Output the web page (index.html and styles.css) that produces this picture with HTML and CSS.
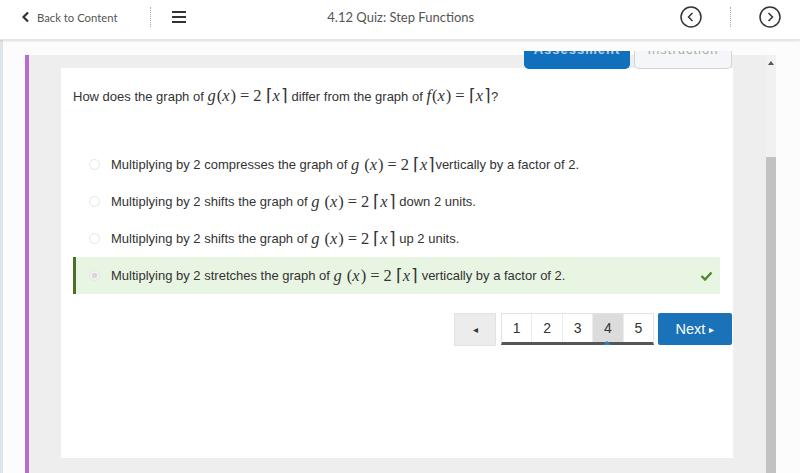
FILE: index.html
```html
<!DOCTYPE html>
<html lang="en">
<head>
    <meta charset="UTF-8">
    <title>4.12 Quiz: Step Functions</title>
    <link rel="stylesheet" href="styles.css">
</head>
<body>
<header class="topbar">
    <a class="back-link" href="#">
        <svg width="9" height="12" viewBox="0 0 9 12"><path d="M7 1.5 L2.5 6 L7 10.5" fill="none" stroke="#333" stroke-width="2.2"/></svg>
        Back to Content
    </a>
    <span class="dots"></span>
    <span class="burger"><i></i><i></i><i></i></span>
    <div class="title">4.12 Quiz: Step Functions</div>
    <span class="circle-btn">
        <svg width="22" height="22" viewBox="0 0 22 22"><circle cx="11" cy="11" r="10" fill="none" stroke="#333" stroke-width="1.5"/><path d="M12.5 7 L8.5 11 L12.5 15" fill="none" stroke="#333" stroke-width="1.5"/></svg>
    </span>
    <span class="dots dots-right"></span>
    <span class="circle-btn circle-next">
        <svg width="22" height="22" viewBox="0 0 22 22"><circle cx="11" cy="11" r="10" fill="none" stroke="#333" stroke-width="1.5"/><path d="M9.5 7 L13.5 11 L9.5 15" fill="none" stroke="#333" stroke-width="1.5"/></svg>
    </span>
</header>

<div class="page">
    <div class="panel">
        <div class="panel-main">
            <div class="tabs">
                <div class="tab tab-active"><span>Assessment</span></div>
                <div class="tab"><span>Instruction</span></div>
            </div>

            <div class="card">
                <p class="question">
                    How does the graph of
                    <span class="math"><i>g</i>(<i>x</i>)<span class="rel">=</span>2<span class="sp"></span>⌈<i>x</i>⌉</span>
                    differ from the graph of
                    <span class="math"><i>f</i>(<i>x</i>)<span class="rel">=</span>⌈<i>x</i>⌉</span>?
                </p>

                <div class="options">
                    <div class="option">
                        <span class="radio"></span>
                        Multiplying by 2 compresses the graph of&nbsp;<span class="math"><i>g</i><span class="sp"></span>(<i>x</i>)<span class="rel">=</span>2<span class="sp"></span>⌈<i>x</i>⌉</span>vertically by a factor of 2.
                    </div>
                    <div class="option">
                        <span class="radio"></span>
                        Multiplying by 2 shifts the graph of&nbsp;<span class="math"><i>g</i><span class="sp"></span>(<i>x</i>)<span class="rel">=</span>2<span class="sp"></span>⌈<i>x</i>⌉</span>&nbsp;down 2 units.
                    </div>
                    <div class="option">
                        <span class="radio"></span>
                        Multiplying by 2 shifts the graph of&nbsp;<span class="math"><i>g</i><span class="sp"></span>(<i>x</i>)<span class="rel">=</span>2<span class="sp"></span>⌈<i>x</i>⌉</span>&nbsp;up 2 units.
                    </div>
                    <div class="option option-correct">
                        <span class="radio radio-on"></span>
                        Multiplying by 2 stretches the graph of&nbsp;<span class="math"><i>g</i><span class="sp"></span>(<i>x</i>)<span class="rel">=</span>2<span class="sp"></span>⌈<i>x</i>⌉</span>&nbsp;vertically by a factor of 2.
                        <svg class="check" width="13" height="10" viewBox="0 0 13 10"><path d="M1.5 5 L5 8.5 L11.5 1.5" fill="none" stroke="#4c8a26" stroke-width="2.4"/></svg>
                    </div>
                </div>

                <div class="pager">
                    <span class="pg-prev">◂</span>
                    <div class="pg-pages">
                        <span class="pg">1</span>
                        <span class="pg">2</span>
                        <span class="pg">3</span>
                        <span class="pg pg-current">4</span>
                        <span class="pg">5</span>
                    </div>
                    <span class="pg-next">Next <small>▸</small></span>
                </div>
            </div>
        </div>
        <div class="scrollbar">
            <span class="scroll-up"></span>
            <div class="thumb"></div>
        </div>
    </div>
</div>
</body>
</html>
```

FILE: styles.css
```css
body {
    margin: 0;
    height: 473px;
    overflow: hidden;
    font-family: "Liberation Sans", Arial, sans-serif;
    color: #333;
    background: #fcfcfc;
}

.topbar {
    position: relative;
    z-index: 2;
    height: 40px;
    padding-bottom: 5px;
    display: flex;
    align-items: center;
    background: white;
    box-shadow: 0 1px 2px rgba(0, 0, 0, 0.12);
    border-bottom: 1px solid #e6e6e6;
    box-sizing: border-box;
    font-family: Lato, sans-serif;
    font-size: 12.5px;
    color: #555;
}

.back-link {
    display: flex;
    align-items: center;
    gap: 7px;
    margin-left: 21px;
    font-size: 11.3px;
    color: #555;
    text-decoration: none;
}

.dots {
    width: 0;
    height: 20px;
    margin-left: 32px;
    border-left: 1px dotted #aaa;
}

.dots-right {
    margin-left: 28px;
}

.burger {
    display: flex;
    flex-direction: column;
    gap: 3px;
    margin-left: 21px;
}

.burger i {
    width: 14px;
    height: 2px;
    background: #333;
}

.title {
    flex: 1;
    text-align: center;
    padding-right: 64px;
    font-size: 13px;
}

.circle-btn {
    display: flex;
}

.circle-next {
    margin-left: 28px;
    margin-right: 19px;
}

.page {
    height: 433px;
    border-left: 3px solid #dde5ea;
    padding: 15px 24px 0 22px;
    box-sizing: border-box;
}

.panel {
    display: flex;
    height: 100%;
    border-left: 4px solid #b96bd0;
    background: #eeeeee;
}

.panel-main {
    flex: 1;
    padding: 0 33px 0 32px;
}

/* tabs are scrolled mostly out of view, only their lower edge shows */
.tabs {
    display: flex;
    justify-content: flex-end;
    gap: 4px;
    margin: -4px 1px 0 0;
    height: 17px;
}

.tab {
    width: 96px;
    height: 17px;
    overflow: hidden;
    text-align: center;
    background: #f4f6f9;
    border: 1px solid #d3d3d3;
    border-top: none;
    border-radius: 0 0 5px 5px;
    font-size: 13px;
    color: #aaa;
    letter-spacing: 1px;
}

.tab span {
    display: block;
    line-height: 14px;
    margin-top: -8px;
}

.tab-active {
    width: 104px;
    background: #1170bd;
    border-color: #1170bd;
    color: #b8d0e8;
    font-weight: bold;
}

.card {
    background: white;
    height: 390px;
    padding: 19px 0 0 12px;
    box-sizing: border-box;
}

.question {
    margin: 0;
    font-size: 13px;
    line-height: 18px;
}

.math {
    font-family: "Liberation Serif", serif;
    font-size: 16.5px;
    white-space: nowrap;
}

.math i {
    padding-right: 1px;
}

.rel {
    padding: 0 4px;
}

.sp {
    display: inline-block;
    width: 4px;
}

.options {
    margin: 40px 13px 0 0;
}

.option {
    display: flex;
    align-items: center;
    height: 37px;
    padding-left: 13px;
    border-left: 3px solid transparent;
    font-size: 13px;
}

.option-correct {
    background: #e9f5e3;
    border-left-color: #4b6f2a;
}

.radio {
    width: 9px;
    height: 9px;
    border: 1px solid #e6e6e6;
    border-radius: 50%;
    margin-right: 11px;
    flex-shrink: 0;
}

.radio-on {
    background: radial-gradient(circle, #d8d8d8 0 2.5px, #f2f2f2 3px);
}

.check {
    margin-left: auto;
    margin-right: 7px;
}

.pager {
    display: flex;
    justify-content: flex-end;
    align-items: flex-start;
    gap: 4px;
    margin: 19px 1px 0 0;
}

.pg-prev {
    width: 40px;
    height: 31px;
    line-height: 31px;
    margin-right: 1px;
    text-align: center;
    background: #ececec;
    border: 1px solid #e2e2e2;
    font-size: 10px;
    color: #333;
}

.pg-pages {
    display: flex;
    border: 1px solid #e2e2e2;
    border-bottom: 3px solid #555;
    height: 28px;
}

.pg {
    position: relative;
    width: 29.4px;
    line-height: 28px;
    text-align: center;
    font-size: 14px;
    border-left: 1px solid #ececec;
}

.pg:first-child {
    border-left: none;
}

.pg-current {
    background: #dcdcdc;
}

.pg-current::after {
    content: "";
    position: absolute;
    left: 10px;
    bottom: -3px;
    border: 4px solid transparent;
    border-bottom-color: #2b7fc2;
    border-top: none;
}

.pg-next {
    width: 74px;
    height: 32px;
    line-height: 32px;
    text-align: center;
    background: #1a72b9;
    color: white;
    font-size: 14.5px;
    border-radius: 2px;
}

.pg-next small {
    font-size: 10px;
    vertical-align: 1px;
}

.scrollbar {
    position: relative;
    width: 10px;
    overflow: hidden;
    background: #f1f1f1;
}

.scroll-up {
    position: absolute;
    top: 6px;
    left: 2px;
    border: 3px solid transparent;
    border-bottom: 4px solid #555;
    border-top: none;
}

.thumb {
    margin-top: 102px;
    height: 400px;
    background: #c2c2c2;
}
```
